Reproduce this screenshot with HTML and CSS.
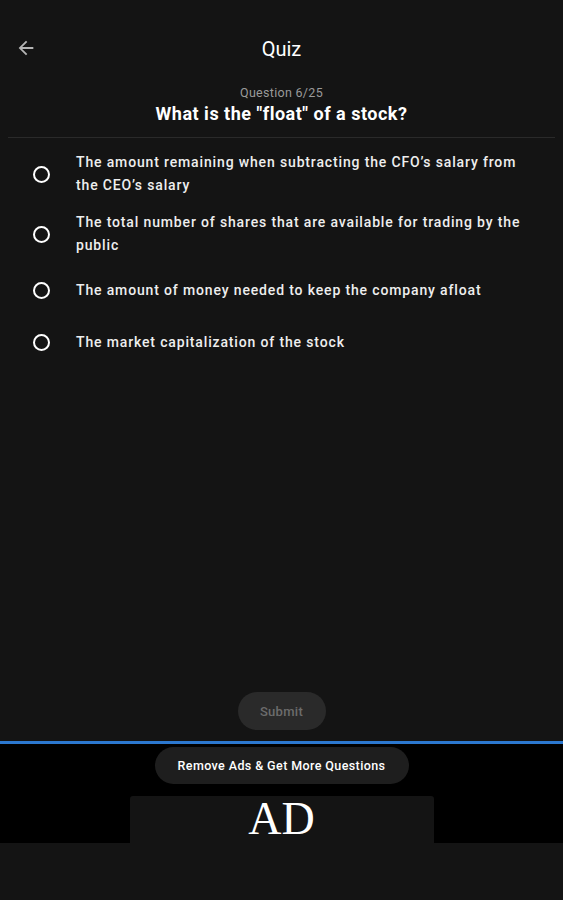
FILE: index.html
```html
<!DOCTYPE html>
<html lang="en">
<head>
    <meta charset="UTF-8">
    <meta name="viewport" content="width=device-width, initial-scale=1.0">
    <title>Quiz</title>
    <link rel="stylesheet" href="styles.css">
</head>
<body>
    <div class="app">
        <header class="top-bar">
            <button class="back-button" aria-label="Back">
                <svg width="22" height="22" viewBox="0 0 24 24">
                    <path d="M20 11H7.83l5.59-5.59L12 4l-8 8 8 8 1.41-1.41L7.83 13H20v-2z" fill="currentColor"/>
                </svg>
            </button>
            <h1>Quiz</h1>
        </header>

        <section class="question-head">
            <div class="question-count">Question 6/25</div>
            <h2 class="question-text">What is the "float" of a stock?</h2>
        </section>

        <ul class="answers">
            <li class="answer">
                <span class="radio"></span>
                <span class="answer-text">The amount remaining when subtracting the CFO’s salary from the CEO’s salary</span>
            </li>
            <li class="answer">
                <span class="radio"></span>
                <span class="answer-text">The total number of shares that are available for trading by the public</span>
            </li>
            <li class="answer">
                <span class="radio"></span>
                <span class="answer-text">The amount of money needed to keep the company afloat</span>
            </li>
            <li class="answer">
                <span class="radio"></span>
                <span class="answer-text">The market capitalization of the stock</span>
            </li>
        </ul>

        <div class="submit-row">
            <button class="submit-button" disabled>Submit</button>
        </div>

        <footer class="ad-area">
            <button class="remove-ads">Remove Ads &amp; Get More Questions</button>
            <div class="ad-box">AD</div>
        </footer>
    </div>
</body>
</html>
```

FILE: styles.css
```css
* {
    margin: 0;
    padding: 0;
    box-sizing: border-box;
}

body {
    font-family: Roboto, 'Liberation Sans', sans-serif;
    background-color: #141414;
    color: #ffffff;
    width: 563px;
    height: 900px;
    overflow: hidden;
}

.app {
    display: flex;
    flex-direction: column;
    height: 900px;
}

.top-bar {
    position: relative;
    height: 56px;
    margin-top: 21px;
    display: flex;
    align-items: center;
    justify-content: center;
}

.back-button {
    position: absolute;
    left: 15px;
    top: 16px;
    background: none;
    border: none;
    color: #b5b5b5;
    display: flex;
}

.top-bar h1 {
    font-size: 20px;
    font-weight: 400;
    margin-top: -1px;
}

.question-head {
    text-align: center;
    margin: 8px 8px 0;
    padding-bottom: 12px;
    border-bottom: 1px solid #2a2a2a;
}

.question-count {
    font-size: 12.5px;
    letter-spacing: 0.3px;
    color: #9a9a9a;
    line-height: 16px;
}

.question-text {
    font-size: 18px;
    font-weight: 700;
    letter-spacing: 0.5px;
    line-height: 23px;
    margin-top: 1px;
}

.answers {
    list-style: none;
    padding: 6px 34px 0 33px;
}

.answer {
    display: flex;
    align-items: center;
    gap: 26px;
    min-height: 52px;
    padding: 7px 0;
}

.radio {
    flex: none;
    width: 17px;
    height: 17px;
    border: 2.5px solid #ffffff;
    border-radius: 50%;
}

.answer-text {
    font-size: 14px;
    font-weight: 500;
    line-height: 23px;
    color: #eeeeee;
    letter-spacing: 0.85px;
}

.submit-row {
    margin-top: auto;
    display: flex;
    justify-content: center;
    padding-bottom: 11px;
}

.submit-button {
    font-family: inherit;
    font-size: 13px;
    font-weight: 500;
    letter-spacing: 0.3px;
    color: #6c6c6c;
    background-color: #2a2a2a;
    border: none;
    border-radius: 19px;
    width: 88px;
    height: 38px;
}

.ad-area {
    background-color: #000000;
    border-top: 3px solid #2c78cf;
    display: flex;
    flex-direction: column;
    align-items: center;
    height: 159px;
    padding-top: 3px;
}

.remove-ads {
    font-family: inherit;
    font-size: 12.5px;
    font-weight: 500;
    letter-spacing: 0.4px;
    color: #ffffff;
    background-color: #1e1e1e;
    border: none;
    border-radius: 19px;
    width: 254px;
    height: 37px;
}

.ad-box {
    margin-top: 12px;
    width: 304px;
    height: 47px;
    background-color: #141414;
    border-radius: 3px 3px 0 0;
    font-family: 'Liberation Serif', serif;
    font-size: 46px;
    line-height: 45px;
    text-align: center;
    color: #ffffff;
}

.ad-area::after {
    content: "";
    align-self: stretch;
    flex: 1;
    background-color: #141414;
}
```
